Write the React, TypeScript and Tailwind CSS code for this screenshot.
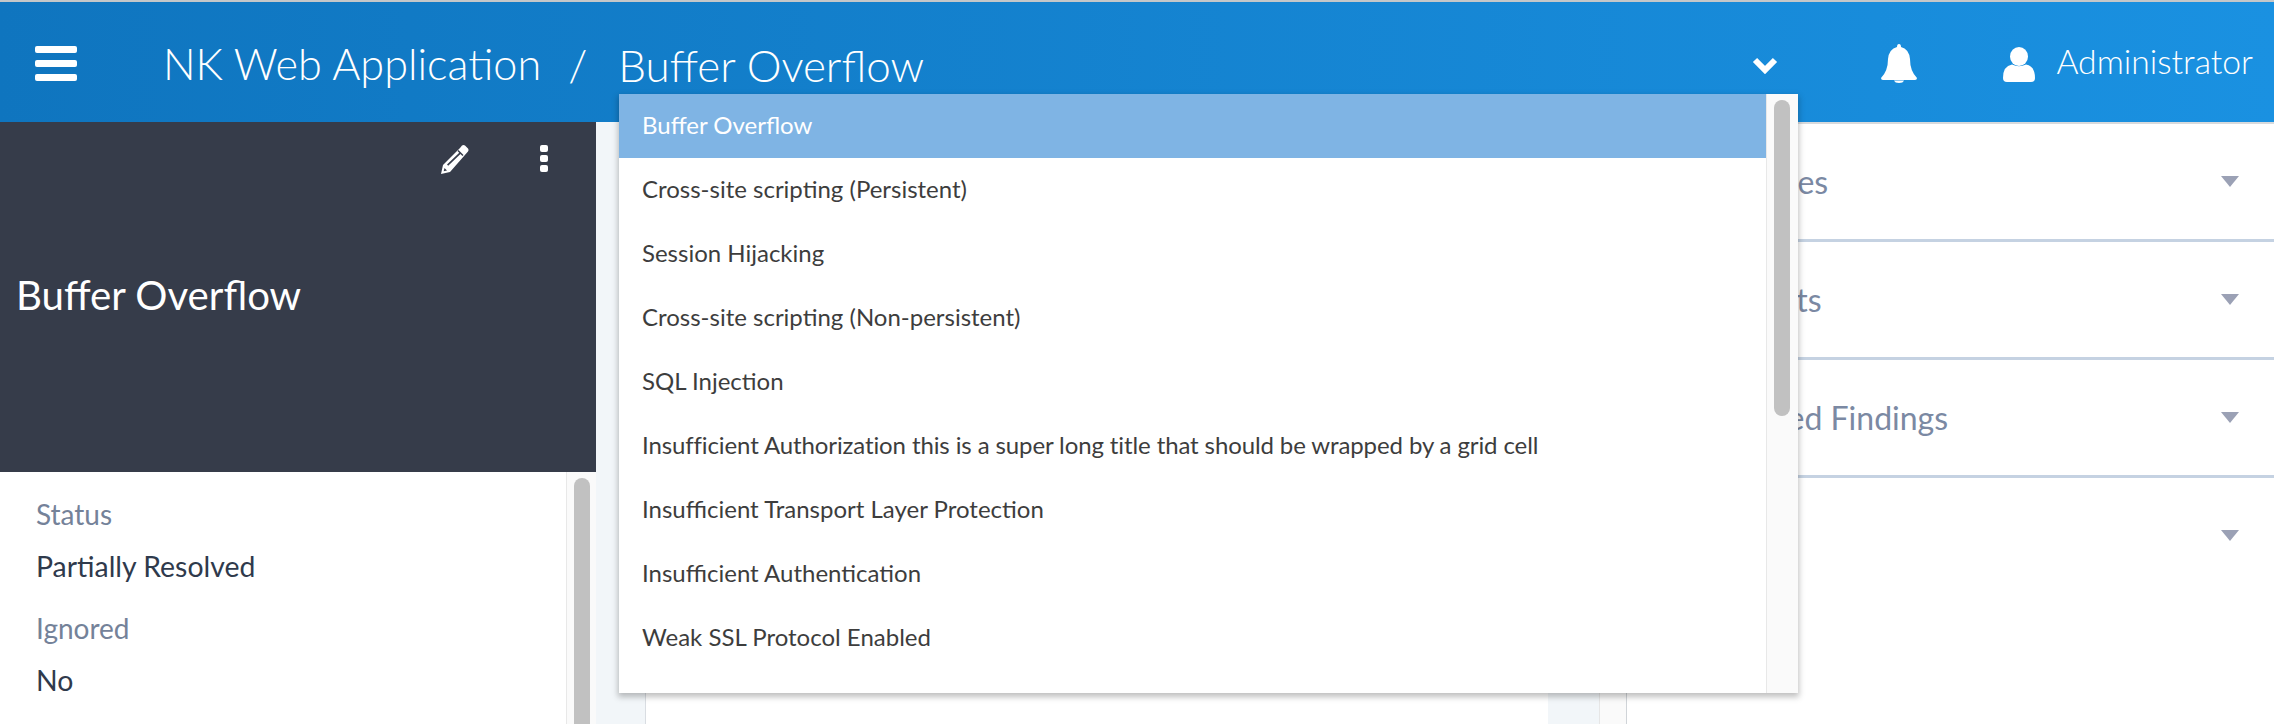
const options = [
  "Buffer Overflow",
  "Cross-site scripting (Persistent)",
  "Session Hijacking",
  "Cross-site scripting (Non-persistent)",
  "SQL Injection",
  "Insufficient Authorization this is a super long title that should be wrapped by a grid cell",
  "Insufficient Transport Layer Protection",
  "Insufficient Authentication",
  "Weak SSL Protocol Enabled",
];

const sections = ["New Issues", "Comments", "Associated Findings", "History"];

function Triangle() {
  return (
    <svg width="18" height="11" viewBox="0 0 18 11" className="shrink-0">
      <path d="M0 0h18L9 11z" fill="#9ba1b5" />
    </svg>
  );
}

function Pencil() {
  return (
    <svg width="28" height="29" viewBox="0 0 28 29">
      <path
        fillRule="evenodd"
        fill="#fff"
        d="M0 29l2-9L19 3l2-2.500q1.500-1 3 0l3 3q1 1.500 0 3L9 27zM3.500 23l-.8 3.300 3.300-.8zM6 19.500l1.200 1.200L20 8.500l-1.200-1.200z"
      />
      <path d="M17 5.500l5 5" stroke="#363c4a" strokeWidth="1.500" />
    </svg>
  );
}

function Bell() {
  return (
    <svg width="36" height="39" viewBox="0 0 36 39">
      <path
        fill="#fff"
        d="M18 0q2 0 2 3 8 2 9 12 0 12 7 19 0 2-2 2H2q-2 0-2-2 7-7 7-19 1-10 9-12 0-3 2-3z"
      />
      <path fill="#fff" d="M13 36.500h10q-1 2.500-5 2.500t-5-2.500z" />
    </svg>
  );
}

function Chevron() {
  return (
    <svg width="26" height="17" viewBox="0 0 26 17">
      <path d="M3 3l10 10L23 3" fill="none" stroke="#fff" strokeWidth="6" />
    </svg>
  );
}

function UserIcon() {
  return (
    <svg width="32" height="35" viewBox="0 0 32 35">
      <ellipse cx="16" cy="9.500" rx="9" ry="9.500" fill="#fff" />
      <path d="M0 31q0-12 9-13.500 7 3.500 14 0 9 1.500 9 13.500 0 4-4 4H4q-4 0-4-4z" fill="#fff" />
    </svg>
  );
}

function Header() {
  return (
    <header className="h-[122px] shrink-0 flex items-center border-t-2 border-[#c4c7c9] bg-gradient-to-r from-[#0f75bf] to-[#1a91e1] text-white">
      <div className="ml-[35px] w-[42px] flex flex-col gap-[7px] mt-[2px]">
        <div className="h-[7px] rounded-[2px] bg-white" />
        <div className="h-[7px] rounded-[2px] bg-white" />
        <div className="h-[7px] rounded-[2px] bg-white" />
      </div>
      <div className="ml-[86px] flex items-center font-light leading-none mt-[4px]">
        <span className="text-[43.200px]">NK Web Application</span>
        <span className="ml-[27px] text-[44px]">/</span>
        <span className="ml-[31px] mt-[2px] text-[44px]">Buffer Overflow</span>
      </div>
      <div className="ml-auto mr-[103px] mt-[6px]">
        <Chevron />
      </div>
      <div className="mr-[86px] mt-[3px]">
        <Bell />
      </div>
      <div className="mr-[21px] flex items-center gap-[21px] mt-[4px]">
        <UserIcon />
        <span className="text-[33.700px] font-light leading-none -mt-[5px]">Administrator</span>
      </div>
    </header>
  );
}

export default function App() {
  return (
    <div className="relative h-[724px] w-[2274px] overflow-hidden flex flex-col bg-white font-['Lato',sans-serif]">
      <Header />

      <div className="flex-1 flex min-h-0">
        <aside className="w-[596px] shrink-0 flex flex-col">
          <div className="h-[350px] shrink-0 bg-[#363c4a] text-white flex flex-col">
            <div className="flex justify-end items-start pt-[23px] pr-[48px] gap-[71px]">
              <Pencil />
              <div className="flex flex-col gap-[3px] w-[8px]">
                <div className="h-[7px] rounded-[2px] bg-white" />
                <div className="h-[7px] rounded-[2px] bg-white" />
                <div className="h-[7px] rounded-[2px] bg-white" />
              </div>
            </div>
            <div className="pl-[16px] mt-[101px] text-[40.200px] leading-none">Buffer Overflow</div>
          </div>
          <div className="flex-1 flex min-h-0">
            <div className="flex-1 pl-[36px] pt-[26px]">
              <div className="text-[28px] leading-[32px] text-[#748299]">Status</div>
              <div className="mt-[20px] text-[28.400px] leading-[32px] text-[#2f3a4c]">Partially Resolved</div>
              <div className="mt-[30px] text-[28px] leading-[32px] text-[#748299]">Ignored</div>
              <div className="mt-[20px] text-[28.400px] leading-[32px] text-[#2f3a4c]">No</div>
            </div>
            <div className="w-[30px] border-l border-[#e8e8e8] bg-[#fafafa] pl-[7px] pt-[6px]">
              <div className="w-[16px] h-[400px] rounded-full bg-[#c1c1c1]" />
            </div>
          </div>
        </aside>

        <main className="flex-1 flex min-w-0 bg-[#f2f6f9] pl-[49px]">
          <div className="w-[903px] mt-[40px] bg-white border-l border-[#d9dde2]" />
          <div className="ml-[51px] flex-1 bg-[#fafafa] border-l border-[#e6e6e6] border-r border-r-[#d0d4d8]" />
        </main>

        <section className="w-[647px] shrink-0 flex flex-col border-t-2 border-[#d8dadc]">
          {sections.map((title) => (
            <div key={title} className="h-[118px] shrink-0 flex items-center justify-between pl-[43px] pr-[35px] border-b-[3px] border-b-[#c5d2e2] last:border-b-transparent">
              <span className="text-[32px] text-[#7b89a3]">{title}</span>
              <Triangle />
            </div>
          ))}
        </section>
      </div>

      {/* dropdown list, sits over the page */}
      <div className="absolute left-[619px] top-[94px] w-[1179px] h-[599px] bg-white flex shadow-[0_3px_6px_1px_rgba(0,0,0,0.25)]">
        <ul className="flex-1 min-w-0">
          {options.map((o, i) => (
            <li
              key={o}
              className={
                i === 0
                  ? "h-[64px] flex items-center pl-[23px] pb-[2px] text-[24px] text-white bg-[#7fb4e4]"
                  : i === 5
                    ? "h-[64px] flex items-center pl-[23px] pb-[2px] text-[24px] tracking-[-0.11px] text-[#3d3d3d]"
                    : "h-[64px] flex items-center pl-[23px] pb-[2px] text-[24px] text-[#3d3d3d]"
              }
            >
              {o}
            </li>
          ))}
        </ul>
        <div className="w-[32px] shrink-0 bg-[#fafafa] border-l border-[#e8e8e8] pl-[7px] pt-[6px]">
          <div className="w-[16px] h-[316px] rounded-full bg-[#c1c1c1]" />
        </div>
      </div>
    </div>
  );
}
